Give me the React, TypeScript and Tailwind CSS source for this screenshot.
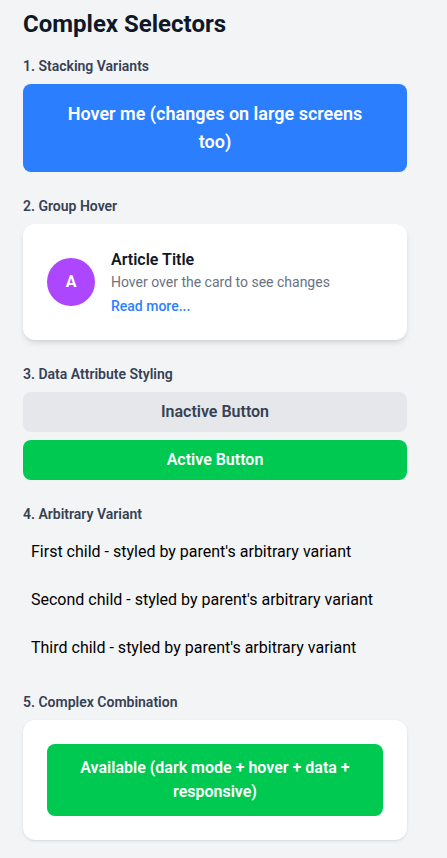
import React from "react";

const font = { fontFamily: 'Roboto, "Noto Sans", sans-serif' };

function SectionTitle({ children }: { children: React.ReactNode }) {
  return <h2 className="mb-2 text-sm font-semibold text-gray-700">{children}</h2>;
}

export default function App() {
  return (
    <div className="min-h-[858px] bg-gray-100" style={font}>
      <div className="w-[407px] pl-[23px] pt-2 pb-6">
        <h1 className="mb-4 text-2xl font-bold text-gray-900">Complex Selectors</h1>

        <div className="space-y-6">
          {/* 1 */}
          <section>
            <SectionTitle>1. Stacking Variants</SectionTitle>
            <button className="w-full rounded-lg bg-blue-500 px-8 py-4 text-lg font-semibold text-white">
              Hover me (changes on large screens too)
            </button>
          </section>

          {/* 2 */}
          <section>
            <SectionTitle>2. Group Hover</SectionTitle>
            <div className="flex items-center gap-4 rounded-xl bg-white p-6 shadow-md">
              <div className="flex h-12 w-12 shrink-0 items-center justify-center rounded-full bg-purple-500 font-bold text-white">
                A
              </div>
              <div>
                <h3 className="font-semibold text-gray-900">Article Title</h3>
                <p className="text-sm text-gray-500">Hover over the card to see changes</p>
                <span className="mt-1 block text-sm font-medium text-blue-500">Read more...</span>
              </div>
            </div>
          </section>

          {/* 3 */}
          <section>
            <SectionTitle>3. Data Attribute Styling</SectionTitle>
            <div className="space-y-2">
              <button className="w-full rounded-lg bg-gray-200 px-4 py-2 font-semibold text-gray-700">
                Inactive Button
              </button>
              <button className="w-full rounded-lg bg-green-500 px-4 py-2 font-semibold text-white">
                Active Button
              </button>
            </div>
          </section>

          {/* 4 */}
          <section>
            <SectionTitle>4. Arbitrary Variant</SectionTitle>
            <ul className="space-y-2 text-black">
              <li className="p-2">First child - styled by parent's arbitrary variant</li>
              <li className="p-2">Second child - styled by parent's arbitrary variant</li>
              <li className="p-2">Third child - styled by parent's arbitrary variant</li>
            </ul>
          </section>

          {/* 5 */}
          <section>
            <SectionTitle>5. Complex Combination</SectionTitle>
            <div className="rounded-xl bg-white p-6 shadow-sm">
              <button className="w-full rounded-lg bg-green-500 px-6 py-3 font-semibold text-white">
                Available (dark mode + hover + data + responsive)
              </button>
            </div>
          </section>
        </div>
      </div>
    </div>
  );
}
